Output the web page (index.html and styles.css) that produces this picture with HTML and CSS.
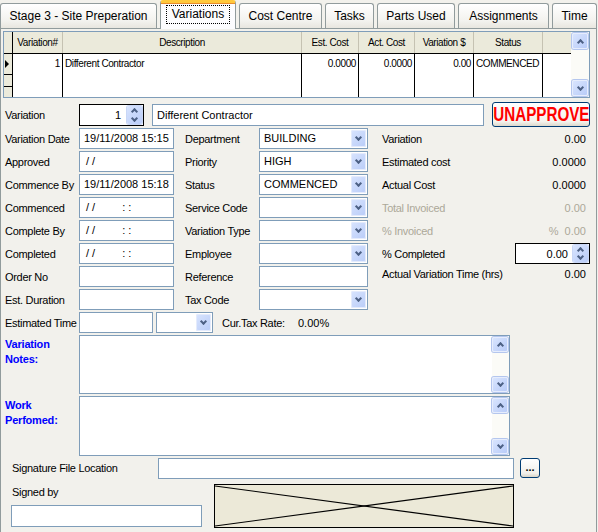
FILE: index.html
```html
<!DOCTYPE html>
<html lang="en">
<head>
    <meta charset="UTF-8">
    <title>Variations</title>
    <link rel="stylesheet" href="styles.css">
</head>
<body>
    <div class="tabs">
        <div class="tab">Stage 3 - Site Preperation</div>
        <div class="tab active"><span class="focus">Variations</span></div>
        <div class="tab">Cost Centre</div>
        <div class="tab">Tasks</div>
        <div class="tab">Parts Used</div>
        <div class="tab">Assignments</div>
        <div class="tab">Time</div>
    </div>

    <div class="page">
        <!-- variations list -->
        <div class="grid">
            <div class="grid-main">
                <div class="grid-head">
                    <div class="gh ind"></div>
                    <div class="gh">Variation#</div>
                    <div class="gh">Description</div>
                    <div class="gh">Est. Cost</div>
                    <div class="gh">Act. Cost</div>
                    <div class="gh">Variation $</div>
                    <div class="gh">Status</div>
                    <div class="gh last"></div>
                </div>
                <div class="grid-data">
                    <div class="gd ind">
                        <div class="ind-cell"><span class="arrow"></span></div>
                        <div class="ind-cell short"></div>
                    </div>
                    <div class="gd num">1</div>
                    <div class="gd">Different Contractor</div>
                    <div class="gd num">0.0000</div>
                    <div class="gd num">0.0000</div>
                    <div class="gd num">0.00</div>
                    <div class="gd">COMMENCED</div>
                    <div class="gd last"></div>
                </div>
            </div>
            <div class="vscroll">
                <div class="sbtn"><span class="chev up"></span></div>
                <div class="sbtn"><span class="chev down"></span></div>
            </div>
        </div>

        <div class="var-row">
            <span class="lbl">Variation</span>
            <div class="spin var-spin">
                <span class="spin-val">1</span>
                <span class="spin-btn"><span class="mini up"></span><span class="mini down"></span></span>
            </div>
            <div class="field desc">Different Contractor</div>
            <div class="unapprove"><span>UNAPPROVE</span></div>
        </div>

        <div class="form">
            <span class="lbl">Variation Date</span>
            <div class="field">19/11/2008 15:15</div>
            <span class="lbl c2">Department</span>
            <div class="field combo"><span>BUILDING</span><span class="drop"><span class="chev down"></span></span></div>
            <span class="lbl c3">Variation</span>
            <span class="val">0.00</span>

            <span class="lbl">Approved</span>
            <div class="field"><span class="mask">/ /</span></div>
            <span class="lbl c2">Priority</span>
            <div class="field combo"><span>HIGH</span><span class="drop"><span class="chev down"></span></span></div>
            <span class="lbl c3">Estimated cost</span>
            <span class="val">0.0000</span>

            <span class="lbl">Commence By</span>
            <div class="field">19/11/2008 15:18</div>
            <span class="lbl c2">Status</span>
            <div class="field combo"><span>COMMENCED</span><span class="drop"><span class="chev down"></span></span></div>
            <span class="lbl c3">Actual Cost</span>
            <span class="val">0.0000</span>

            <span class="lbl">Commenced</span>
            <div class="field"><span class="mask">/ /</span><span class="mask time">: :</span></div>
            <span class="lbl c2">Service Code</span>
            <div class="field combo"><span></span><span class="drop"><span class="chev down"></span></span></div>
            <span class="lbl c3 dim">Total Invoiced</span>
            <span class="val dim">0.00</span>

            <span class="lbl">Complete By</span>
            <div class="field"><span class="mask">/ /</span><span class="mask time">: :</span></div>
            <span class="lbl c2">Variation Type</span>
            <div class="field combo"><span></span><span class="drop"><span class="chev down"></span></span></div>
            <span class="lbl c3 dim">% Invoiced</span>
            <span class="val dim">%&nbsp;&nbsp;0.00</span>

            <span class="lbl">Completed</span>
            <div class="field"><span class="mask">/ /</span><span class="mask time">: :</span></div>
            <span class="lbl c2">Employee</span>
            <div class="field combo"><span></span><span class="drop"><span class="chev down"></span></span></div>
            <span class="lbl c3">% Completed</span>
            <div class="spin pct-spin">
                <span class="spin-val">0.00</span>
                <span class="spin-btn"><span class="mini up"></span><span class="mini down"></span></span>
            </div>

            <span class="lbl">Order No</span>
            <div class="field"></div>
            <span class="lbl c2">Reference</span>
            <div class="field"></div>
            <span class="lbl c3 hrs">Actual Variation Time (hrs)</span>
            <span class="val hrs">0.00</span>

            <span class="lbl">Est. Duration</span>
            <div class="field"></div>
            <span class="lbl c2">Tax Code</span>
            <div class="field combo"><span></span><span class="drop"><span class="chev down"></span></span></div>
            <span></span>
            <span></span>

            <span class="lbl">Estimated Time</span>
            <div class="est-row">
                <div class="field est-time"></div>
                <div class="field combo est-unit"><span></span><span class="drop"><span class="chev down"></span></span></div>
                <span class="tax-lbl">Cur.Tax Rate:</span>
                <span>0.00%</span>
            </div>
        </div>

        <div class="notes">
            <div class="lbl-blue">Variation<br>Notes:</div>
            <div class="memo">
                <div class="vscroll">
                    <div class="sbtn"><span class="chev up"></span></div>
                    <div class="sbtn"><span class="chev down"></span></div>
                </div>
            </div>
        </div>
        <div class="notes work">
            <div class="lbl-blue">Work<br>Perfomed:</div>
            <div class="memo">
                <div class="vscroll">
                    <div class="sbtn"><span class="chev up"></span></div>
                    <div class="sbtn"><span class="chev down"></span></div>
                </div>
            </div>
        </div>

        <div class="sig-row">
            <span class="lbl">Signature File Location</span>
            <div class="field sig-file"></div>
            <div class="browse">...</div>
        </div>

        <div class="signed">
            <div class="signed-left">
                <span class="lbl">Signed by</span>
                <div class="field"></div>
            </div>
            <div class="picture">
                <svg width="298" height="42" viewBox="0 0 298 42" preserveAspectRatio="none">
                    <line x1="0" y1="1" x2="298" y2="41" stroke="#000" stroke-width="1.2"/>
                    <line x1="0" y1="41" x2="298" y2="1" stroke="#000" stroke-width="1.2"/>
                </svg>
            </div>
        </div>
    </div>
</body>
</html>
```

FILE: styles.css
```css
* {
    margin: 0;
    padding: 0;
    box-sizing: border-box;
}

body {
    width: 598px;
    height: 532px;
    overflow: hidden;
    background: #f2f1ec;
    font-family: "Liberation Sans", Arial, sans-serif;
    font-size: 11px;
    color: #000;
}

/* tab strip */
.tabs {
    display: flex;
    align-items: flex-end;
    gap: 3px;
    height: 28px;
    position: relative;
    z-index: 2;
}

.tab {
    height: 25px;
    border: 1px solid #919b9c;
    border-bottom: none;
    border-radius: 3px 3px 0 0;
    background: linear-gradient(#ffffff, #f3f2ee 70%, #e8e6df);
    font-size: 12px;
    line-height: 24px;
    text-align: center;
    white-space: nowrap;
    overflow: hidden;
}

.tab:nth-child(1) { width: 157px; }
.tab:nth-child(2) { width: 76px; }
.tab:nth-child(3) { width: 83px; }
.tab:nth-child(4) { width: 49px; }
.tab:nth-child(5) { width: 78px; }
.tab:nth-child(6) { width: 91px; }
.tab:nth-child(7) { width: 45px; }

.tab.active {
    height: 29px;
    margin-bottom: -1px;
    border-top: 3px solid #ffc83c;
    box-shadow: inset 0 1px 0 #e68b2c;
    background: #fcfcfe;
    line-height: 20px;
    padding-top: 1px;
}

.focus {
    display: inline-block;
    padding: 0 5px;
    line-height: 17px;
    border: 1px dotted #000;
}

/* tab page */
.page {
    width: 597px;
    height: 506px;
    border: 1px solid #919b9c;
    background: #f2f1ec;
}

.lbl {
    letter-spacing: -0.3px;
    white-space: nowrap;
}

.dim {
    color: #aca899;
}

.field {
    height: 21px;
    border: 1px solid #7f9db9;
    background: #fff;
    padding-left: 4px;
    line-height: 19px;
    white-space: nowrap;
    overflow: hidden;
}

/* data grid */
.grid {
    display: flex;
    height: 67px;
    margin: 2px 6px 0 2px;
    border: 1px solid #7f9db9;
    background: #fff;
}

.grid-main {
    flex: 1;
    display: flex;
    flex-direction: column;
}

.grid-head,
.grid-data {
    display: grid;
    grid-template-columns: 9px 50px 239px 57px 56px 59px 69px 1fr;
}

.grid-head {
    height: 22px;
    background: #ebeadb;
    border-bottom: 1px solid #000;
}

.gh {
    border-right: 1px solid #c5c2b2;
    font-size: 10px;
    letter-spacing: -0.4px;
    line-height: 21px;
    text-align: center;
    white-space: nowrap;
}

.gh.ind {
    border-right: 1px solid #000;
}

.gh.last {
    border-right: none;
}

.grid-data {
    flex: 1;
}

.gd {
    border-right: 1px solid #000;
    font-size: 10px;
    letter-spacing: -0.4px;
    padding: 4px 2px 0;
    white-space: nowrap;
    overflow: hidden;
}

.gd.num {
    text-align: right;
}

.gd.last {
    border-right: none;
}

.gd.ind {
    padding: 0;
    background: #ebeadb;
}

.ind-cell {
    height: 21px;
    border-bottom: 1px solid #000;
    display: flex;
    align-items: center;
    padding-left: 1px;
}

.ind-cell.short {
    height: 12px;
}

.arrow {
    width: 0;
    height: 0;
    border-top: 4px solid transparent;
    border-bottom: 4px solid transparent;
    border-left: 4px solid #000;
}

/* scrollbars */
.vscroll {
    width: 18px;
    display: flex;
    flex-direction: column;
    justify-content: space-between;
    background: #fbfbf7;
    padding: 1px;
}

.sbtn {
    height: 16px;
    border: 1px solid #e6edfd;
    border-radius: 2px;
    background: linear-gradient(135deg, #d8e4fe, #b9ccf8);
    box-shadow: 0 0 0 1px #b4c6ee;
    display: flex;
    align-items: center;
    justify-content: center;
}

.chev {
    width: 5px;
    height: 5px;
    border: solid #4d6185;
    border-width: 2px 2px 0 0;
}

.chev.up {
    transform: translateY(1px) rotate(-45deg);
}

.chev.down {
    transform: translateY(-1px) rotate(135deg);
}

/* variation row */
.var-row {
    display: flex;
    align-items: center;
    height: 25px;
    margin: 4px 0 1px 4px;
}

.var-row .lbl {
    width: 74px;
}

.spin {
    height: 22px;
    display: flex;
    align-items: center;
    border: 1px solid #000;
    background: #fff;
    padding: 1px;
}

.spin-val {
    flex: 1;
    text-align: right;
    padding-right: 6px;
}

.spin-btn {
    width: 15px;
    height: 100%;
    display: flex;
    flex-direction: column;
    border-radius: 2px;
    background: linear-gradient(135deg, #d8e4fe, #b9ccf8);
    box-shadow: 0 0 0 1px #c9d7f6;
}

.mini {
    flex: 1;
    display: flex;
    align-items: center;
    justify-content: center;
}

.mini::after {
    content: "";
    width: 3px;
    height: 3px;
    border: solid #4d6185;
    border-width: 2px 2px 0 0;
}

.mini.up::after {
    transform: translateY(1px) rotate(-45deg);
}

.mini.down::after {
    transform: translateY(-1px) rotate(135deg);
}

.var-spin {
    width: 65px;
}

.desc {
    width: 332px;
    height: 22px;
    margin-left: 8px;
    line-height: 20px;
}

.unapprove {
    width: 98px;
    height: 25px;
    margin-left: 8px;
    border: 1px solid #003c74;
    border-radius: 3px;
    background: linear-gradient(#ffffff, #f4f3ee 80%, #dcd8cc);
    display: flex;
    align-items: center;
    justify-content: center;
    overflow: hidden;
}

.unapprove span {
    color: #ff0000;
    font-weight: bold;
    font-size: 20px;
    transform: scaleX(0.76);
    white-space: nowrap;
}

/* main form */
.form {
    display: grid;
    grid-template-columns: 74px 95px 85px 109px 1fr auto;
    grid-template-rows: repeat(9, 21px);
    row-gap: 2px;
    width: 581px;
    margin-left: 4px;
    align-items: center;
}

.c2 {
    padding-left: 11px;
}

.c3 {
    padding-left: 14px;
}

.val {
    justify-self: end;
    white-space: nowrap;
}

.val.hrs,
.lbl.hrs {
    align-self: start;
    margin-top: 2px;
}

.mask {
    display: inline-block;
    margin-left: 2px;
}

.mask.time {
    margin-left: 27px;
}

.combo {
    display: flex;
    align-items: center;
    justify-content: space-between;
    padding-right: 1px;
}

.drop {
    width: 15px;
    height: 17px;
    border-radius: 2px;
    background: linear-gradient(135deg, #d8e4fe, #b9ccf8);
    box-shadow: inset 0 0 0 1px #e4ebfc;
    display: flex;
    align-items: center;
    justify-content: center;
}

.pct-spin {
    width: 75px;
    height: 21px;
    margin-right: -4px;
    justify-self: end;
}

.pct-spin .spin-val {
    padding-right: 5px;
}

.est-row {
    grid-column: 2 / -1;
    display: flex;
    align-items: center;
}

.est-time {
    width: 74px;
}

.est-unit {
    width: 57px;
    margin-left: 3px;
}

.tax-lbl {
    width: 76px;
    margin-left: 9px;
    letter-spacing: -0.3px;
}

/* memo boxes */
.notes {
    display: flex;
    margin: 2px 0 0 4px;
}

.lbl-blue {
    width: 74px;
    padding-top: 2px;
    color: #0000ff;
    font-weight: bold;
    line-height: 15px;
    letter-spacing: -0.2px;
}

.memo {
    width: 431px;
    height: 59px;
    border: 1px solid #7f9db9;
    background: #fff;
    display: flex;
    justify-content: flex-end;
}

.notes.work .memo {
    height: 60px;
}

.memo .vscroll {
    width: 17px;
    padding: 1px 1px 1px 0;
}

.memo .sbtn {
    height: 15px;
}

/* signature */
.sig-row {
    display: flex;
    align-items: center;
    height: 22px;
    margin: 1px 0 0 11px;
}

.sig-row .lbl {
    width: 146px;
}

.sig-file {
    width: 356px;
}

.browse {
    width: 20px;
    height: 20px;
    margin-left: 6px;
    border: 1px solid #003c74;
    border-radius: 3px;
    background: linear-gradient(#ffffff, #f0efea 80%, #d8d4c8);
    font-size: 11px;
    font-weight: bold;
    line-height: 16px;
    text-align: center;
}

.signed {
    display: flex;
    gap: 12px;
    margin: 5px 0 0 10px;
}

.signed-left {
    width: 191px;
    display: flex;
    flex-direction: column;
}

.signed-left .lbl {
    height: 21px;
    line-height: 16px;
    padding-left: 1px;
}

.signed-left .field {
    height: 22px;
}

.picture {
    width: 300px;
    height: 44px;
    border: 1px solid #000;
    background: #ece9d8;
}

.picture svg {
    display: block;
}
```
